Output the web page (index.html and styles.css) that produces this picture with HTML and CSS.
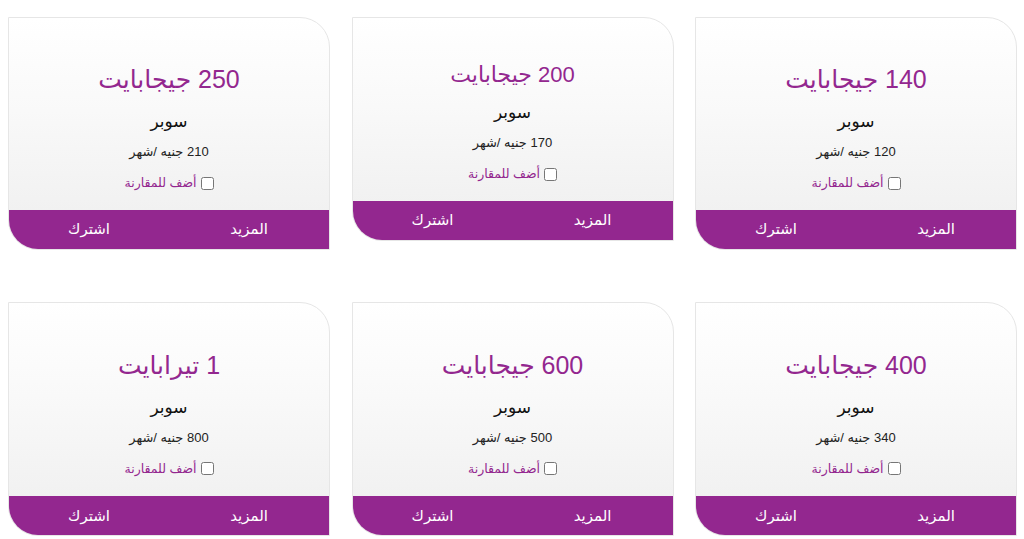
FILE: index.html
```html
<!DOCTYPE html>
<html lang="ar" dir="rtl">
<head>
<meta charset="utf-8">
<title>باقات الإنترنت</title>
<link rel="stylesheet" href="styles.css">
</head>
<body>
<main class="plans">
  <article class="card">
    <div class="card-body">
      <h3 class="card-title">140 جيجابايت</h3>
      <p class="card-plan">سوبر</p>
      <p class="card-price">120 جنيه /شهر</p>
      <label class="card-compare"><input type="checkbox"> أضف للمقارنة</label>
    </div>
    <div class="card-actions"><a href="#">المزيد</a><a href="#">اشترك</a></div>
  </article>
  <article class="card card--compact">
    <div class="card-body">
      <h3 class="card-title">200 جيجابايت</h3>
      <p class="card-plan">سوبر</p>
      <p class="card-price">170 جنيه /شهر</p>
      <label class="card-compare"><input type="checkbox"> أضف للمقارنة</label>
    </div>
    <div class="card-actions"><a href="#">المزيد</a><a href="#">اشترك</a></div>
  </article>
  <article class="card">
    <div class="card-body">
      <h3 class="card-title">250 جيجابايت</h3>
      <p class="card-plan">سوبر</p>
      <p class="card-price">210 جنيه /شهر</p>
      <label class="card-compare"><input type="checkbox"> أضف للمقارنة</label>
    </div>
    <div class="card-actions"><a href="#">المزيد</a><a href="#">اشترك</a></div>
  </article>
  <article class="card card--tall">
    <div class="card-body">
      <h3 class="card-title">400 جيجابايت</h3>
      <p class="card-plan">سوبر</p>
      <p class="card-price">340 جنيه /شهر</p>
      <label class="card-compare"><input type="checkbox"> أضف للمقارنة</label>
    </div>
    <div class="card-actions"><a href="#">المزيد</a><a href="#">اشترك</a></div>
  </article>
  <article class="card card--tall">
    <div class="card-body">
      <h3 class="card-title">600 جيجابايت</h3>
      <p class="card-plan">سوبر</p>
      <p class="card-price">500 جنيه /شهر</p>
      <label class="card-compare"><input type="checkbox"> أضف للمقارنة</label>
    </div>
    <div class="card-actions"><a href="#">المزيد</a><a href="#">اشترك</a></div>
  </article>
  <article class="card card--tall">
    <div class="card-body">
      <h3 class="card-title">1 تيرابايت</h3>
      <p class="card-plan">سوبر</p>
      <p class="card-price">800 جنيه /شهر</p>
      <label class="card-compare"><input type="checkbox"> أضف للمقارنة</label>
    </div>
    <div class="card-actions"><a href="#">المزيد</a><a href="#">اشترك</a></div>
  </article>
</main>
</body>
</html>
```

FILE: styles.css
```css
html, body {
  margin: 0;
  padding: 0;
  background: #ffffff;
}

body {
  font-family: "Liberation Sans", "DejaVu Sans", sans-serif;
  color: #222;
}

.plans {
  direction: rtl;
  display: grid;
  grid-template-columns: repeat(3, 322px);
  column-gap: 21.5px;
  row-gap: 52px;
  align-items: start;
  padding: 17px 7px 0 7px;
}

.card {
  border: 1px solid #e6e6e6;
  border-radius: 0 30px 0 30px;
  overflow: hidden;
  background: linear-gradient(to bottom, #ffffff 0%, #f9f9f9 40%, #eeeeee 100%);
}

.card-body {
  padding: 45px 10px 16px;
  text-align: center;
}

.card-title {
  margin: 0 0 15px;
  font-size: 25px;
  line-height: 32px;
  font-weight: normal;
  color: #93278f;
}

.card-plan {
  margin: 0 0 9px;
  font-size: 17px;
  line-height: 24px;
  color: #111;
}

.card-price {
  margin: 0 0 12px;
  font-size: 13px;
  line-height: 18px;
  color: #222;
}

.card-compare {
  display: inline-flex;
  align-items: center;
  gap: 4px;
  font-size: 12.5px;
  line-height: 20px;
  color: #93278f;
}

.card-compare input {
  margin: 0;
  width: 13px;
  height: 13px;
}

.card--compact .card-body {
  padding-top: 43px;
}

.card--compact .card-title {
  font-size: 22px;
  line-height: 28px;
  margin-bottom: 12px;
}

.card--tall .card-body {
  padding-top: 46px;
  padding-bottom: 17px;
}

.card-actions {
  display: flex;
  height: 39px;
  background: #93278f;
}

.card-actions a {
  flex: 1;
  display: flex;
  align-items: center;
  justify-content: center;
  color: #ffffff;
  text-decoration: none;
  font-size: 15px;
}
```
